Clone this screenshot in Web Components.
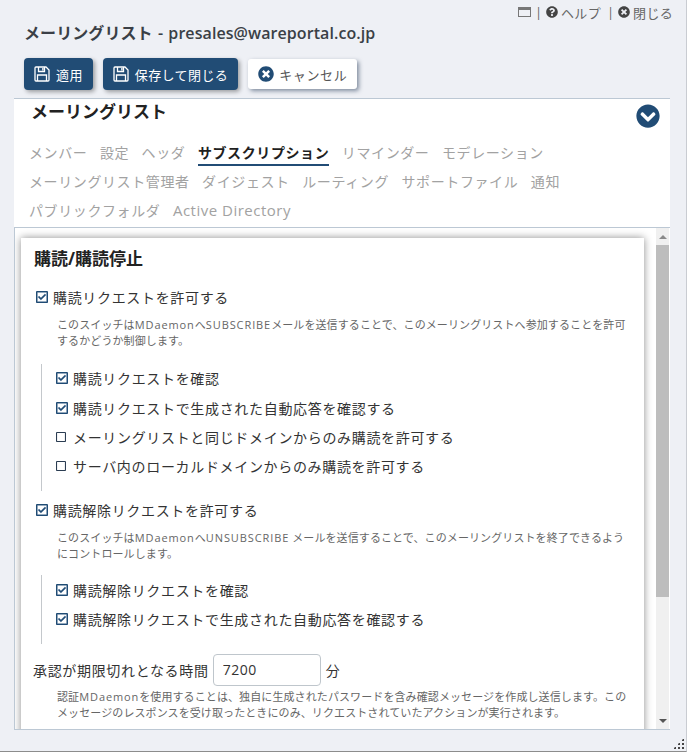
<!DOCTYPE html>
<html lang="ja">
<head>
<meta charset="utf-8">
<title>メーリングリスト</title>
<style>
    html, body { margin: 0; height: 100%; }
    body { font-family: "Open Sans", "Noto Sans CJK JP", sans-serif; overflow: hidden; }
</style>
</head>
<body>
<ml-window>
    <span slot="title">メーリングリスト - presales@wareportal.co.jp</span>
    <ml-button slot="actions" kind="primary" icon="save">適用</ml-button>
    <ml-button slot="actions" kind="primary" icon="save">保存して閉じる</ml-button>
    <ml-button slot="actions" kind="plain" icon="times">キャンセル</ml-button>

    <ml-nav slot="nav" heading="メーリングリスト">
        <ml-tab>メンバー</ml-tab>
        <ml-tab>設定</ml-tab>
        <ml-tab>ヘッダ</ml-tab>
        <ml-tab active>サブスクリプション</ml-tab>
        <ml-tab>リマインダー</ml-tab>
        <ml-tab>モデレーション</ml-tab>
        <ml-tab>メーリングリスト管理者</ml-tab>
        <ml-tab>ダイジェスト</ml-tab>
        <ml-tab>ルーティング</ml-tab>
        <ml-tab>サポートファイル</ml-tab>
        <ml-tab>通知</ml-tab>
        <ml-tab>パブリックフォルダ</ml-tab>
        <ml-tab style="font-size:15px;letter-spacing:.5px">Active Directory</ml-tab>
    </ml-nav>

    <ml-card heading="購読/購読停止">
        <ml-check checked>購読リクエストを許可する</ml-check>
        <ml-note>このスイッチは<span>MDaemon</span>へ<span>SUBSCRIBE</span>メールを送信することで、このメーリングリストへ参加することを許可<br>するかどうか制御します。</ml-note>
        <ml-group>
            <ml-check checked>購読リクエストを確認</ml-check>
            <ml-check checked>購読リクエストで生成された自動応答を確認する</ml-check>
            <ml-check>メーリングリストと同じドメインからのみ購読を許可する</ml-check>
            <ml-check>サーバ内のローカルドメインからのみ購読を許可する</ml-check>
        </ml-group>
        <ml-check checked>購読解除リクエストを許可する</ml-check>
        <ml-note>このスイッチは<span>MDaemon</span>へ<span>UNSUBSCRIBE</span> メールを送信することで、このメーリングリストを終了できるよう<br>にコントロールします。</ml-note>
        <ml-group style="margin-top:13px">
            <ml-check checked>購読解除リクエストを確認</ml-check>
            <ml-check checked>購読解除リクエストで生成された自動応答を確認する</ml-check>
        </ml-group>
        <ml-number label="承認が期限切れとなる時間" value="7200" unit="分"></ml-number>
        <ml-note style="padding-top:3.5px">認証<span>MDaemon</span>を使用することは、独自に生成されたパスワードを含み確認メッセージを作成し送信します。この<br>メッセージのレスポンスを受け取ったときにのみ、リクエストされていたアクションが実行されます。</ml-note>
    </ml-card>
</ml-window>

<script>
const ICONS = {
    times: '<svg viewBox="0 0 512 512"><path fill="currentColor" d="M256 8C119 8 8 119 8 256s111 248 248 248 248-111 248-248S393 8 256 8zm121.6 313.1c4.7 4.7 4.7 12.3 0 17L338 377.6c-4.7 4.7-12.3 4.7-17 0L256 312l-65.1 65.6c-4.7 4.7-12.3 4.7-17 0L134.4 338c-4.7-4.7-4.7-12.3 0-17l65.6-65-65.6-65.1c-4.7-4.7-4.7-12.3 0-17l39.6-39.6c4.7-4.7 12.3-4.7 17 0l65 65.7 65.1-65.6c4.7-4.7 12.3-4.7 17 0l39.6 39.6c4.7 4.7 4.7 12.3 0 17L312 256l65.6 65.1z"/></svg>',
    question: '<svg viewBox="0 0 512 512"><path fill="currentColor" d="M504 256c0 136.997-111.043 248-248 248S8 392.997 8 256C8 119.083 119.043 8 256 8s248 111.083 248 248zM262.655 90c-54.497 0-89.255 22.957-116.549 63.758-3.536 5.286-2.353 12.415 2.715 16.258l34.699 26.31c5.205 3.947 12.621 3.008 16.665-2.122 17.864-22.658 30.113-35.797 57.303-35.797 20.429 0 45.698 13.148 45.698 32.958 0 14.976-12.363 22.667-32.534 33.976C247.128 238.528 216 254.941 216 296v4c0 6.627 5.373 12 12 12h56c6.627 0 12-5.373 12-12v-1.333c0-28.462 83.186-29.647 83.186-106.667 0-58.002-60.165-102-116.531-102zM256 338c-25.365 0-46 20.635-46 46 0 25.364 20.635 46 46 46s46-20.636 46-46c0-25.365-20.635-46-46-46z"/></svg>',
    chevron: '<svg viewBox="0 0 512 512"><path fill="currentColor" d="M504 256c0 137-111 248-248 248S8 393 8 256 119 8 256 8s248 111 248 248zM273 369.9l135.5-135.5c9.4-9.4 9.4-24.6 0-33.9l-17-17c-9.4-9.4-24.6-9.4-33.9 0L256 285.1 154.4 183.5c-9.4-9.4-24.6-9.4-33.9 0l-17 17c-9.4 9.4-9.4 24.6 0 33.9L239 369.9c9.4 9.4 24.6 9.4 34 0z"/></svg>',
    save: '<svg viewBox="0 0 16 16"><g fill="none" stroke="currentColor" stroke-width="1.3"><path d="M2 1h10l3 3v10a1 1 0 0 1-1 1H2a1 1 0 0 1-1-1V2a1 1 0 0 1 1-1z"/><path d="M4.5 1v4.5h6V1"/><path d="M3.5 15V9h9v6"/></g><path fill="currentColor" d="M8.2 2h1.4v2.5H8.2z"/></svg>',
    checked: '<svg viewBox="0 32 448 448"><path fill="currentColor" stroke="currentColor" stroke-width="14" d="M400 32H48C21.49 32 0 53.49 0 80v352c0 26.51 21.49 48 48 48h352c26.51 0 48-21.49 48-48V80c0-26.51-21.49-48-48-48zm0 400H48V80h352v352zm-35.864-241.724L191.547 361.48c-4.705 4.667-12.303 4.637-16.97-.068l-90.781-91.516c-4.667-4.705-4.637-12.303.069-16.971l22.719-22.536c4.705-4.667 12.303-4.637 16.97.069l59.792 60.277 141.352-140.216c4.705-4.667 12.303-4.637 16.97.068l22.536 22.718c4.667 4.706 4.637 12.304-.068 16.971z"/></svg>',
    unchecked: '<svg viewBox="0 32 448 448"><path fill="currentColor" d="M400 32H48C21.5 32 0 53.5 0 80v352c0 26.5 21.5 48 48 48h352c26.5 0 48-21.5 48-48V80c0-26.5-21.5-48-48-48zm-6 400H54c-3.3 0-6-2.7-6-6V86c0-3.3 2.7-6 6-6h340c3.3 0 6 2.7 6 6v340c0 3.3-2.7 6-6 6z"/></svg>'
};

class MlElement extends HTMLElement {
    constructor(html) {
        super();
        this.attachShadow({mode: 'open'});
        this.shadowRoot.innerHTML = html;
    }
}

class MlWindow extends MlElement {
    constructor() {
        super(`
        <style>
            :host { display: flex; flex-direction: column; box-sizing: border-box; height: 752px; background: #eef0f5; border-bottom: 1px solid #8c8c8c; border-right: 1px solid #c9ccd2; position: relative; }
            .top { display: flex; justify-content: flex-end; align-items: center; height: 24px; margin-bottom: -8px; padding-right: 13px; font-size: 13px; color: #666; }
            .top svg { width: 12px; height: 12px; display: block; color: #444; }
            .win { width: 13px; height: 10px; border: 1.5px solid #777; border-top-width: 3px; box-sizing: border-box; margin-right: 4px; }
            .sep { margin-right: 4px; }
            .link { display: flex; align-items: center; gap: 3px; margin-right: 6px; letter-spacing: .3px; }
            .link:last-child { margin-right: 0; }
            .title { margin: 0 0 0 24px; height: 32px; display: flex; align-items: center; font-size: 16px; font-weight: 600; color: #3a3f46; word-spacing: 1px; letter-spacing: .08px; }
            .actions { display: flex; gap: 10px; margin: 10px 0 0 24px; align-items: flex-start; height: 40px; }
            .frame { margin: 0 16px 0 14px; flex: 1; display: flex; flex-direction: column; min-height: 0; }
            .body { flex: 1; min-height: 0; display: flex; background: #fff; border: 1px solid #bcc8d4; border-right: 0; overflow: hidden; margin-bottom: 21px; }
            .scroller { flex: 1; min-width: 0; padding: 10px 12px 0 6px; overflow: hidden; }
            .bar { width: 13px; margin-right: 1px; background: #f0f0f0; display: flex; flex-direction: column; align-items: center; }
            .arrow { height: 17px; display: flex; align-items: center; justify-content: center; }
            .arrow i { display: block; border: 4px solid transparent; border-top: 0; border-bottom: 4px solid #8a8a8a; }
            .arrow.down i { border-bottom: 0; border-top: 4px solid #555; }
            .track { flex: 1; width: 100%; }
            .thumb { height: 352px; background: #bdbdbd; }
            .grip { position: absolute; right: 2px; bottom: 2px; width: 11px; height: 11px; background-image: radial-gradient(#444 0 1.4px, transparent 1.5px); background-size: 4px 4px; clip-path: polygon(100% 0, 100% 100%, 0 100%); }
        </style>
        <div class="top">
            <span class="win"></span><span class="sep">|</span>
            <span class="link">${ICONS.question}ヘルプ</span><span class="sep">|</span>
            <span class="link">${ICONS.times}閉じる</span>
        </div>
        <h1 class="title"><slot name="title"></slot></h1>
        <div class="actions"><slot name="actions"></slot></div>
        <div class="frame">
            <slot name="nav"></slot>
            <div class="body">
                <div class="scroller"><slot></slot></div>
                <div class="bar">
                    <div class="arrow"><i></i></div>
                    <div class="track"><div class="thumb"></div></div>
                    <div class="arrow down"><i></i></div>
                </div>
            </div>
        </div>
        <div class="grip"></div>`);
    }
}

class MlButton extends MlElement {
    constructor() {
        super(`
        <style>
            :host { display: inline-block; }
            button { display: flex; align-items: center; gap: 6px; font: inherit; font-size: 13px; letter-spacing: .4px; cursor: pointer; box-sizing: border-box; border: 0; border-radius: 4px; height: 32px; padding: 0 10px; color: #fff; background: #214c75; box-shadow: 2px 2px 4px rgba(0,0,0,.35); }
            :host([kind=plain]) button { height: 30px; margin-top: 1px; gap: 5px; letter-spacing: .6px; background: #fff; color: #555; border-radius: 3px; box-shadow: 2px 2px 4px rgba(40,60,90,.55); }
            svg { width: 16px; height: 16px; display: block; }
            :host([kind=plain]) svg { color: #214c75; }
        </style>
        <button type="button"><span class="i"></span><slot></slot></button>`);
    }
    connectedCallback() {
        this.shadowRoot.querySelector('.i').innerHTML = ICONS[this.getAttribute('icon')];
    }
}

class MlNav extends MlElement {
    constructor() {
        super(`
        <style>
            :host { display: block; position: relative; background: #fff; border-top: 1px solid #bcc8d4; height: 129px; box-sizing: border-box; }
            h2 { margin: 0; padding: 0 0 0 17px; height: 28px; font-size: 17px; font-weight: 600; line-height: 26px; color: #222; }
            .tabs { display: flex; flex-wrap: wrap; gap: 0 12.5px; margin: 13px 0 0 15px; }
            .toggle { position: absolute; right: 10px; top: 5px; width: 24px; height: 24px; color: #214c75; }
        </style>
        <h2></h2>
        <div class="toggle">${ICONS.chevron}</div>
        <div class="tabs"><slot></slot></div>`);
    }
    connectedCallback() {
        this.shadowRoot.querySelector('h2').textContent = this.getAttribute('heading');
    }
}

class MlTab extends MlElement {
    constructor() {
        super(`
        <style>
            :host { display: block; height: 29px; line-height: 25px; font-size: 14px; letter-spacing: .6px; color: #a2a2a2; white-space: nowrap; box-sizing: border-box; }
            span { display: inline-block; height: 26px; }
            :host([active]) span { color: #1f1f1f; font-weight: 600; border-bottom: 2px solid #214c75; box-sizing: border-box; }
        </style>
        <span><slot></slot></span>`);
    }
}

class MlCard extends MlElement {
    constructor() {
        super(`
        <style>
            :host { display: block; background: #fff; box-shadow: 0 0 8px rgba(0,0,0,.45); padding: 0 12px 0 13px; height: 600px; box-sizing: border-box; }
            h3 { margin: 0; padding-top: 8px; height: 44px; box-sizing: border-box; font-size: 17px; font-weight: 700; line-height: 26px; color: #222; }
        </style>
        <h3></h3>
        <slot></slot>`);
    }
    connectedCallback() {
        this.shadowRoot.querySelector('h3').textContent = this.getAttribute('heading');
    }
}

class MlCheck extends MlElement {
    constructor() {
        super(`
        <style>
            :host { display: flex; align-items: center; gap: 5px; height: 29.3px; padding-left: 2px; font-size: 14px; letter-spacing: .67px; color: #333; white-space: nowrap; }
            .box { width: 12px; height: 12px; color: #214c75; }
            svg { display: block; width: 12px; height: 12px; }
            :host(:not([checked])) .box { color: #2b3d52; }
            :host(:not([checked])) svg { width: 10px; height: 10px; margin-top: 1px; }
        </style>
        <span class="box"></span><span><slot></slot></span>`);
    }
    connectedCallback() {
        this.shadowRoot.querySelector('.box').innerHTML = this.hasAttribute('checked') ? ICONS.checked : ICONS.unchecked;
    }
}

class MlNote extends MlElement {
    constructor() {
        super(`
        <style>
            :host { display: block; padding: 5.5px 0 0 23px; font-size: 11px; line-height: 16px; letter-spacing: .1px; color: #666; white-space: nowrap; }
            ::slotted(span) { letter-spacing: .9px; }
        </style>
        <slot></slot>`);
    }
}

class MlGroup extends MlElement {
    constructor() {
        super(`
        <style>
            :host { display: block; margin: 15px 0 4.5px 7px; padding: 0 0 10px 12px; border-left: 1px solid #c4c8cc; }
        </style>
        <slot></slot>`);
    }
}

class MlNumber extends MlElement {
    constructor() {
        super(`
        <style>
            :host { display: flex; align-items: center; gap: 4px; height: 32px; font-size: 14px; letter-spacing: .67px; color: #333; margin: 10px 0 0 -1px; }
            input { font: inherit; letter-spacing: .5px; width: 108px; height: 32px; box-sizing: border-box; border: 1px solid #bfc6cc; border-radius: 4px; padding: 0 9px; color: #333; outline: 0; margin-right: 1px; }
        </style>
        <span></span><input type="text"><span></span>`);
    }
    connectedCallback() {
        const spans = this.shadowRoot.querySelectorAll('span');
        spans[0].textContent = this.getAttribute('label');
        spans[1].textContent = this.getAttribute('unit');
        this.shadowRoot.querySelector('input').value = this.getAttribute('value');
    }
}

customElements.define('ml-window', MlWindow);
customElements.define('ml-button', MlButton);
customElements.define('ml-nav', MlNav);
customElements.define('ml-tab', MlTab);
customElements.define('ml-card', MlCard);
customElements.define('ml-check', MlCheck);
customElements.define('ml-note', MlNote);
customElements.define('ml-group', MlGroup);
customElements.define('ml-number', MlNumber);
</script>
</body>
</html>
